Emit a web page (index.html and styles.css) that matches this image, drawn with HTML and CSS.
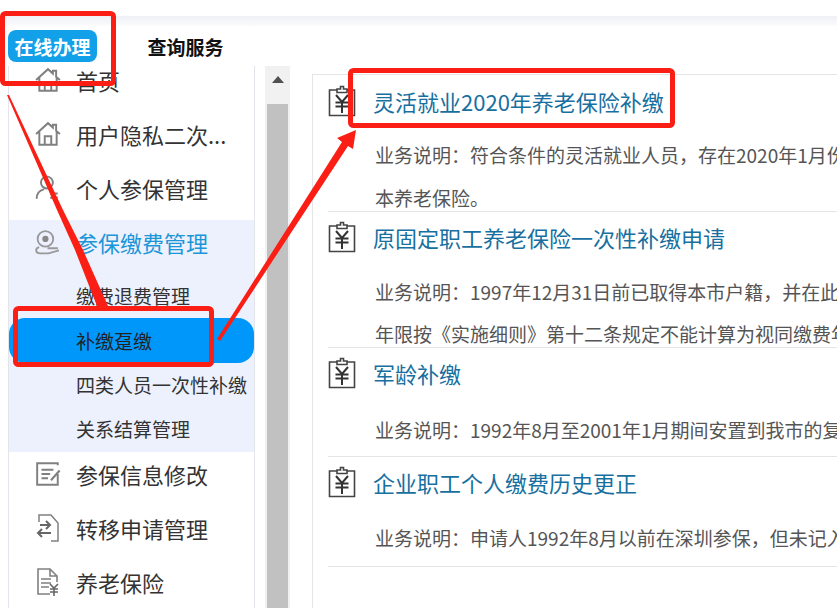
FILE: index.html
```html
<!DOCTYPE html>
<html lang="zh-CN">
<head>
<meta charset="utf-8">
<title>在线办理</title>
<link rel="stylesheet" href="styles.css">
</head>
<body>
<svg class="defs" width="0" height="0" aria-hidden="true">
  <symbol id="i-home" viewBox="0 0 24 24"><path d="M1 12 12 2l4.500 4V3.500h3V9L23 12M4 10v12h16V10M9 22v-8h6v8" fill="none" stroke="#808080" stroke-width="1.800"/></symbol>
  <symbol id="i-yen" viewBox="0 0 28 32"><path d="M9 5H1.500v25.500h25V5H19M9 7.500V4h3.500V1.500h3V4H19v3.500z" fill="none" stroke="#444" stroke-width="1.600"/><path d="M8 10l6 7 6-7M7.500 17.500h13M7.500 21.500h13M14 17v11" fill="none" stroke="#333" stroke-width="2"/></symbol>
</svg>
<div class="strip"></div>
<nav class="tabs">
  <span class="tab tab-on">在线办理</span>
  <span class="tab">查询服务</span>
</nav>
<main class="main">
  <aside class="side">
    <ul class="menu">
      <li class="row"><svg class="ico"><use href="#i-home"/></svg>首页</li>
      <li class="row"><svg class="ico"><use href="#i-home"/></svg>用户隐私二次...</li>
      <li class="row">
        <svg class="ico" viewBox="0 0 24 24"><circle cx="11" cy="7" r="5.500" fill="none" stroke="#808080" stroke-width="1.800"/><path d="M1.500 22c0-5 3-8 7-9M15 13l1.500 2.500M14 17h7M14 21h7" fill="none" stroke="#808080" stroke-width="1.800"/></svg>个人参保管理
      </li>
      <li class="group">
        <div class="row row-open">
          <svg class="ico ico-wide" viewBox="0 0 26 24"><circle cx="11" cy="9" r="7.500" fill="none" stroke="#999" stroke-width="1.800"/><circle cx="11" cy="9" r="3" fill="#888"/><path d="M5 17c-4 1-4 6 1 6h8l10-3M13 18h10" fill="none" stroke="#999" stroke-width="1.800"/></svg>参保缴费管理
        </div>
        <div class="sub sub-first">缴费退费管理</div>
        <div class="sub sub-on">补缴趸缴</div>
        <div class="sub">四类人员一次性补缴</div>
        <div class="sub">关系结算管理</div>
      </li>
      <li class="row">
        <svg class="ico" viewBox="0 0 24 24"><path d="M21 12v10H2V2h19v2" fill="none" stroke="#808080" stroke-width="1.800"/><path d="M6 8h11M6 12h8M6 16h6" stroke="#808080" stroke-width="1.800"/><path d="M14 17l8-9 1.500 1.500-8 9z" fill="#808080"/></svg>参保信息修改
      </li>
      <li class="row">
        <svg class="ico" viewBox="0 0 24 28"><path d="M3 8V1h12l7 8v18h-7" fill="none" stroke="#808080" stroke-width="1.500"/><path d="M4 11h9M10 7l4 4-4 4M15 19H2M6 15l-4 4 4 4" fill="none" stroke="#666" stroke-width="2"/></svg>转移申请管理
      </li>
      <li class="row">
        <svg class="ico" viewBox="0 0 24 28"><path d="M14 26H2V1h12l7 7v6M14 1v7h7" fill="none" stroke="#808080" stroke-width="1.600"/><path d="M5 11h10M5 15h10M5 19h8" stroke="#808080" stroke-width="1.500"/><path d="M14 16l4 4 4-4M14 21h8M14 24h8M18 20v8" fill="none" stroke="#666" stroke-width="1.600"/></svg>养老保险
      </li>
    </ul>
  </aside>
  <div class="scrollbar">
    <div class="scroll-btn"><span class="arrow"></span></div>
    <div class="thumb"></div>
  </div>
  <section class="panel">
    <article class="item item-1">
      <h3 class="title"><svg class="yen"><use href="#i-yen"/></svg>灵活就业2020年养老保险补缴</h3>
      <p class="desc">业务说明：符合条件的灵活就业人员，存在2020年1月份</p>
      <p class="desc">本养老保险。</p>
    </article>
    <article class="item item-2">
      <h3 class="title"><svg class="yen"><use href="#i-yen"/></svg>原固定职工养老保险一次性补缴申请</h3>
      <p class="desc">业务说明：1997年12月31日前已取得本市户籍，并在此</p>
      <p class="desc">年限按《实施细则》第十二条规定不能计算为视同缴费年</p>
    </article>
    <article class="item item-3">
      <h3 class="title"><svg class="yen"><use href="#i-yen"/></svg>军龄补缴</h3>
      <p class="desc">业务说明：1992年8月至2001年1月期间安置到我市的复</p>
    </article>
    <article class="item item-4">
      <h3 class="title"><svg class="yen"><use href="#i-yen"/></svg>企业职工个人缴费历史更正</h3>
      <p class="desc">业务说明：申请人1992年8月以前在深圳参保，但未记入</p>
    </article>
  </section>
</main>
<svg class="notes" viewBox="0 0 837 608" aria-hidden="true">
  <g fill="none" stroke="#fa1e14" stroke-width="5">
    <rect x="2.500" y="13.500" width="111" height="70" rx="3"/>
    <rect x="15.500" y="308.500" width="196" height="56" rx="3"/>
    <rect x="350.500" y="70.500" width="322" height="55" rx="3"/>
  </g>
  <path d="M7 95 57 210 75 250 97 306 108 306 83 250 63 210 9 95z" fill="#fa1e14"/>
  <path d="M217 339 342 142 337 138 356 130 353 149 348 146 220 341z" fill="#fa1e14"/>
</svg>
</body>
</html>
```
FILE: styles.css
```css
* { box-sizing: border-box; }
html, body { margin: 0; padding: 0; height: 608px; overflow: hidden; background: #fff; }
body { position: relative; font-family: "Noto Sans CJK SC", "Noto Sans", sans-serif; color: #333; }
.defs { position: absolute; }
.strip { height: 10px; margin-top: 16px; background: linear-gradient(#eef0f5, #fcfcfe); }
.tabs { display: flex; gap: 44px; height: 40px; padding: 4px 0 0 8px; }
.tab { display: flex; align-items: center; justify-content: center; width: 89px; height: 32px; font-size: 19px; font-weight: 700; color: #111; border-radius: 8px; }
.tab-on { background: #12a0e8; color: #fff; }
.main { display: flex; height: 542px; padding-left: 8px; overflow: hidden; }
.side { flex: none; width: 247px; border-left: 1px solid #e3e5ea; border-right: 1px solid #e3e5ea; overflow: hidden; }
.menu { list-style: none; margin: -13px 0 0; padding: 0; }
.row { display: flex; align-items: center; height: 54px; padding-left: 26px; font-size: 22px; color: #333; }
.ico { flex: none; width: 26px; height: 28px; margin-right: 15px; }
.ico-wide { width: 27px; margin-left: -1px; }
.row-open { color: #1b96d8; }
.group { background: #ecf1fd; height: 232px; margin: 5px 0 -5px; }
.group .row { height: 44px; }
.sub { display: flex; align-items: center; height: 44px; padding-left: 67px; font-size: 19px; white-space: nowrap; color: #333; }
.sub-first { height: 45px; margin-top: 9px; padding-bottom: 1px; }
.sub-on { height: 45px; background: #0097fb; border-radius: 16px; color: #222; margin-bottom: -1px; }
.scrollbar { flex: none; width: 25px; margin-left: 10px; background: #f1f1f1; display: flex; flex-direction: column; align-items: center; }
.scroll-btn { flex: none; height: 38px; width: 100%; display: flex; justify-content: center; padding-top: 10px; }
.arrow { width: 0; height: 0; border-left: 6px solid transparent; border-right: 6px solid transparent; border-bottom: 7px solid #505050; }
.thumb { flex: 1; width: 21px; background: #c1c1c1; }
.panel { flex: none; width: 540px; margin: 8px 0 0 22px; border-left: 1px solid #e5e5e5; border-top: 1px solid #e5e5e5; padding-left: 15px; }
.item { border-bottom: 1px solid #e5e5e5; }
.item-1 { height: 137px; }
.item-2 { height: 136px; }
.item-3 { height: 109px; }
.item-4 { height: 110px; }
.title { display: flex; align-items: center; height: 52px; margin: 0; font-size: 22px; font-weight: 400; color: #17709f; white-space: nowrap; }
.yen { flex: none; width: 28px; height: 32px; margin-right: 17px; }
.item-2 .title { height: 50px; }
.item-3 .title, .item-4 .title { height: 50px; }
.desc { margin: 18px 0 0 47px; height: 24px; line-height: 24px; font-size: 19px; color: #555; white-space: nowrap; }
.item-1 .desc { margin-top: 16px; }
.item-1 .desc + .desc { margin-top: 19px; }
.item-3 .desc { margin-top: 20px; }
.item-4 .desc { margin-top: 19px; }
.notes { position: absolute; left: 0; top: 0; width: 837px; height: 608px; pointer-events: none; }
```
